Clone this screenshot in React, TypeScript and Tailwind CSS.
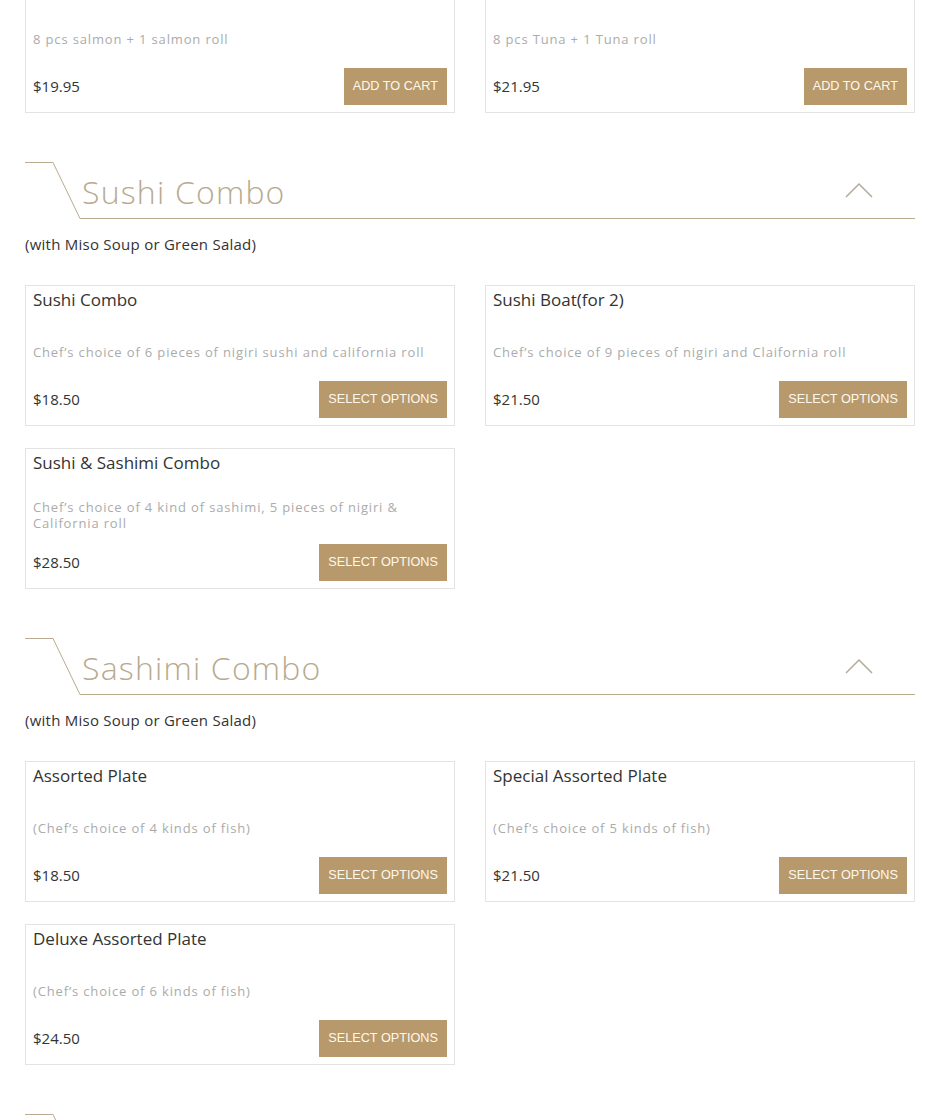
import React from "react";

type Item = { title: string; desc: string; price: string; cta: string };

// Titles of these cards sit above the visible area
const topItems: Item[] = [
  { title: "", desc: "8 pcs salmon + 1 salmon roll", price: "$19.95", cta: "Add to cart" },
  { title: "", desc: "8 pcs Tuna + 1 Tuna roll", price: "$21.95", cta: "Add to cart" },
];

const sections: { title: string; note: string; items: Item[] }[] = [
  {
    title: "Sushi Combo",
    note: "(with Miso Soup or Green Salad)",
    items: [
      { title: "Sushi Combo", desc: "Chef’s choice of 6 pieces of nigiri sushi and california roll", price: "$18.50", cta: "Select options" },
      { title: "Sushi Boat(for 2)", desc: "Chef’s choice of 9 pieces of nigiri and Claifornia roll", price: "$21.50", cta: "Select options" },
      { title: "Sushi & Sashimi Combo", desc: "Chef’s choice of 4 kind of sashimi, 5 pieces of nigiri & California roll", price: "$28.50", cta: "Select options" },
    ],
  },
  {
    title: "Sashimi Combo",
    note: "(with Miso Soup or Green Salad)",
    items: [
      { title: "Assorted Plate", desc: "(Chef’s choice of 4 kinds of fish)", price: "$18.50", cta: "Select options" },
      { title: "Special Assorted Plate", desc: "(Chef’s choice of 5 kinds of fish)", price: "$21.50", cta: "Select options" },
      { title: "Deluxe Assorted Plate", desc: "(Chef’s choice of 6 kinds of fish)", price: "$24.50", cta: "Select options" },
    ],
  },
];

// Product card
const Card = ({ item }: { item: Item }) => (
  <div className="h-[141px] flex flex-col border border-[#e3e3e3] px-[7px] pt-[2px] pb-[7px]">
    <div className="h-[24px] leading-[24px] text-[17px] text-[#333]">{item.title}</div>
    <div className="h-[44px] mt-[18px] flex items-center">
      <p className="text-[13px] leading-[16px] tracking-[0.85px] text-[#ababab]">{item.desc}</p>
    </div>
    <div className="mt-auto flex items-center justify-between">
      <span className="text-[15px] text-[#333]">{item.price}</span>
      <button className="h-[37px] px-[9px] bg-[#b8996b] text-[#fdf8ee] text-[12.7px] uppercase font-['Liberation_Sans',Arial,sans-serif]">
        {item.cta}
      </button>
    </div>
  </div>
);

// Section heading with slanted rule
const Heading = ({ title }: { title?: string }) => (
  <div className="flex h-[57px]">
    <svg width="57" height="57" viewBox="0 0 57 57" className="shrink-0">
      <path d="M0,0.5 L28,0.5 L55,56.5 L57,56.5" fill="none" stroke="#b9ab8d" strokeWidth="1" />
    </svg>
    <div className="flex-1 flex items-center justify-between border-b border-[#b9ab8d] pt-[3px] pr-[42px]">
      <h2 className="text-[32px] font-light text-[#b8aa90] tracking-[1.2px]">{title}</h2>
      <svg width="28" height="16" viewBox="0 0 28 16" className="mb-[3px]">
        <polyline points="1,15 14,2 27,15" fill="none" stroke="#b3aa9a" strokeWidth="1.5" />
      </svg>
    </div>
  </div>
);

export default function App() {
  return (
    <div className="bg-white w-full min-h-[1120px] overflow-hidden font-['Open_Sans',sans-serif]">
      <div className="w-[890px] ml-[25px] mt-[-28px]">
        <div className="grid grid-cols-2 gap-x-[30px]">
          {topItems.map((it) => (
            <Card key={it.desc} item={it} />
          ))}
        </div>

        {sections.map((s) => (
          <div key={s.title} className="mt-[49px]">
            <Heading title={s.title} />
            <p className="mt-[15px] text-[15px] leading-[20px] tracking-[0.25px] text-[#333]">{s.note}</p>
            <div className="mt-[31px] grid grid-cols-2 gap-x-[30px] gap-y-[22px]">
              {s.items.map((it) => (
                <Card key={it.title} item={it} />
              ))}
            </div>
          </div>
        ))}

        {/* next section, only its top rule is in view */}
        <div className="mt-[49px]">
          <Heading />
        </div>
      </div>
    </div>
  );
}
